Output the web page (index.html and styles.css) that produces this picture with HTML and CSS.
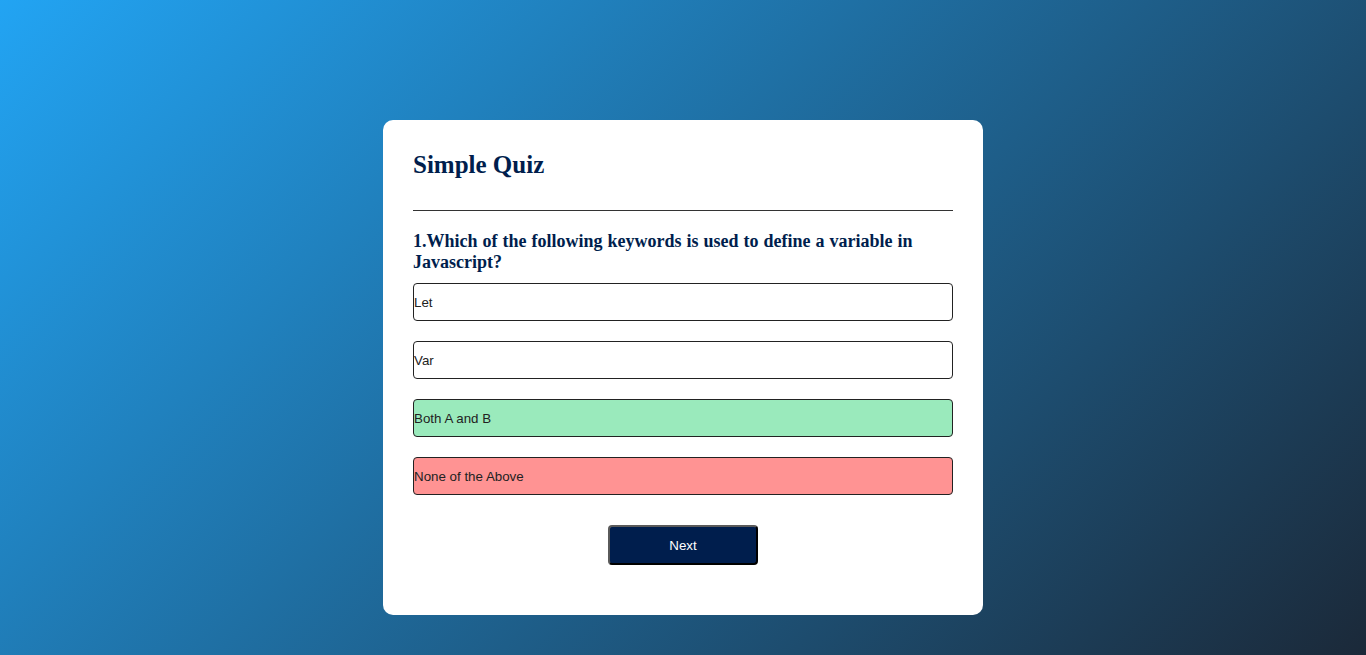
FILE: index.html
```html
<!DOCTYPE html>
<html lang="en">
<head>
<meta charset="UTF-8">
<title>Simple Quiz</title>
<link rel="stylesheet" href="styles.css">
</head>
<body>
  <div class="app">
    <h1 class="title">Simple Quiz</h1>
    <div class="quiz">
      <h2 class="question">1.Which of the following keywords is used to define a variable in Javascript?</h2>
      <div class="answers">
        <button class="btn">Let</button>
        <button class="btn">Var</button>
        <button class="btn correct">Both A and B</button>
        <button class="btn incorrect">None of the Above</button>
      </div>
      <button class="next-btn">Next</button>
    </div>
  </div>
</body>
</html>
```

FILE: styles.css
```css
* {
  box-sizing: border-box;
}

html, body {
  margin: 0;
  padding: 0;
  min-height: 100%;
}

body {
  height: 655px;
  background: linear-gradient(135deg, #22a4f3 0%, #1b2939 100%);
  font-family: "Liberation Serif", "Times New Roman", serif;
  padding-top: 120px;
}

.app {
  background: #fff;
  width: 600px;
  margin: 0 auto;
  border-radius: 10px;
  padding: 30px;
}

.title {
  margin: 0;
  font-size: 25px;
  font-weight: 700;
  color: #001e4d;
  padding-bottom: 31px;
  border-bottom: 1px solid #333;
  line-height: 29px;
}

.quiz {
  padding: 20px 0 20px;
}

.question {
  margin: 0;
  font-size: 18px;
  font-weight: 700;
  color: #001e4d;
  line-height: 21px;
  word-spacing: 0.5px;
}

.answers {
  display: flex;
  flex-direction: column;
  gap: 20px;
  margin-top: 10px;
}

.btn {
  display: block;
  width: 100%;
  height: 38px;
  padding: 0;
  margin: 0;
  background: #fff;
  color: #222;
  border: 1px solid #222;
  border-radius: 4px;
  text-align: left;
  font-family: "Liberation Sans", Arial, sans-serif;
  font-size: 13.33px;
  cursor: pointer;
}

.btn.correct {
  background: #9aeabc;
}

.btn.incorrect {
  background: #ff9393;
}

.next-btn {
  display: block;
  width: 150px;
  height: 40px;
  margin: 30px auto 0;
  padding: 0;
  background: #001e4d;
  color: #fff;
  border-width: 2px;
  border-style: solid;
  border-color: #5a5a5a #000 #000 #5a5a5a;
  border-radius: 4px;
  font-family: "Liberation Sans", Arial, sans-serif;
  font-size: 13.33px;
  cursor: pointer;
}
```
